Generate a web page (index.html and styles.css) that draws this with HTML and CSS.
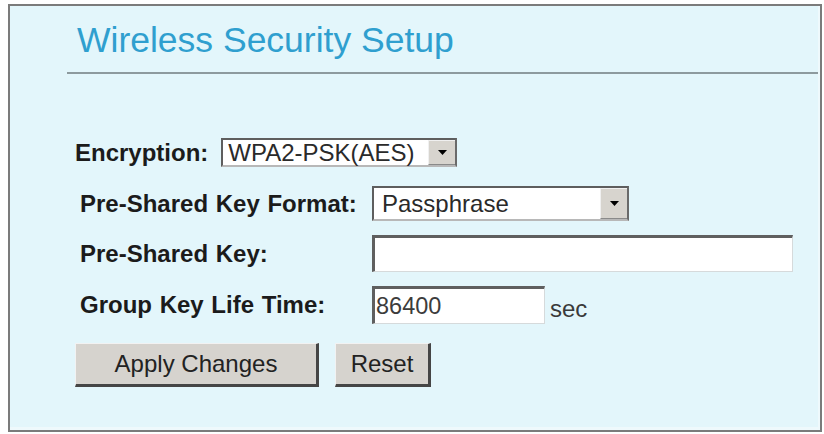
FILE: index.html
```html
<!DOCTYPE html>
<html>
<head>
<meta charset="utf-8">
<link rel="stylesheet" href="styles.css">
</head>
<body>
<div class="frame">
  <h1 class="title">Wireless Security Setup</h1>
  <div class="rule"></div>
  <div class="enc-row">
    <span class="label">Encryption:</span>
    <div class="select select-enc">
      <span class="select-text">WPA2-PSK(AES)</span>
      <span class="arrow"><svg width="9" height="5" viewBox="0 0 9 5"><path d="M0 0H9L4.5 5Z" fill="#000"/></svg></span>
    </div>
  </div>
  <div class="grid">
    <span class="label glabel">Pre-Shared Key Format:</span>
    <div class="select select-fmt">
      <span class="select-text">Passphrase</span>
      <span class="arrow"><svg width="9" height="5" viewBox="0 0 9 5"><path d="M0 0H9L4.5 5Z" fill="#000"/></svg></span>
    </div>
    <span class="label glabel">Pre-Shared Key:</span>
    <div class="input input-psk"></div>
    <span class="label glabel">Group Key Life Time:</span>
    <div class="life">
      <div class="input input-life"><span class="input-text">86400</span></div>
      <span class="unit">sec</span>
    </div>
  </div>
  <div class="buttons">
    <div class="btn btn-apply">Apply Changes</div>
    <div class="btn btn-reset">Reset</div>
  </div>
</div>
</body>
</html>
```
FILE: styles.css
```css
html, body {
  margin: 0;
  padding: 0;
  background: #ffffff;
}
body {
  font-family: "Liberation Sans", Arial, sans-serif;
}
.frame {
  margin: 4px 2px 0 8px;
  height: 428px;
  box-sizing: border-box;
  border: 2px solid #7b7b7b;
  background: #e3f6fb;
  box-shadow: inset -2px -3px 0 #eef9fc;
}
.title {
  margin: 0;
  padding: 14px 0 0 67px;
  font-size: 35.5px;
  line-height: 40px;
  font-weight: normal;
  color: #2f9fcf;
}
.rule {
  margin: 12px 2px 0 57px;
  height: 2px;
  background: #8d9a9e;
}
.label {
  font-size: 24px;
  font-weight: bold;
  color: #1b1b1b;
  white-space: nowrap;
}
.glabel {
  word-spacing: 1px;
}
.enc-row {
  display: flex;
  align-items: center;
  margin: 64px 0 0 65px;
  gap: 13px;
}
.select {
  display: flex;
  align-items: stretch;
  box-sizing: border-box;
  background: #ffffff;
  border-style: solid;
  border-width: 2px 2px 2px 2px;
  border-color: #5e5e5e #6a6a6a #b8b8b8 #5e5e5e;
}
.select-text {
  flex: 1;
  display: flex;
  align-items: center;
  padding-left: 6px;
  font-size: 24px;
  color: #2a2a2a;
  white-space: nowrap;
}
.arrow {
  width: 26px;
  display: flex;
  align-items: center;
  justify-content: center;
  background: #d7d4ce;
  border-left: 1px solid #f0f0f0;
  border-top: 1px solid #f0f0f0;
  border-bottom: 1px solid #8a8a8a;
}
.select-enc {
  width: 236px;
  height: 29px;
}
.select-enc .select-text {
  padding-left: 5px;
}
.grid {
  display: grid;
  grid-template-columns: 292px auto;
  row-gap: 14px;
  align-items: center;
  margin: 19px 0 0 70px;
}
.select-fmt {
  width: 257px;
  height: 35px;
}
.select-fmt .select-text {
  padding-left: 8px;
}
.input {
  box-sizing: border-box;
  background: #ffffff;
  border-style: solid;
  border-width: 3px 1px 1px 3px;
  border-color: #5f5f5f #d6dadb #d6dadb #5f5f5f;
  display: flex;
  align-items: center;
}
.input-psk {
  width: 421px;
  height: 37px;
}
.life {
  display: flex;
  align-items: center;
  gap: 5px;
}
.input-life {
  width: 173px;
  height: 38px;
}
.input-text {
  padding-left: 1px;
  font-size: 23.5px;
  color: #3c3c3c;
}
.unit {
  font-size: 24px;
  color: #3a3a3a;
  padding-top: 8px;
}
.buttons {
  display: flex;
  gap: 16px;
  margin: 19px 0 0 65px;
}
.btn {
  box-sizing: border-box;
  height: 44px;
  display: flex;
  align-items: center;
  justify-content: center;
  background: #d6d3ce;
  border-style: solid;
  border-width: 1px 3px 3px 1px;
  border-color: #f2f2f2 #454545 #454545 #f2f2f2;
  font-size: 24px;
  color: #222222;
}
.btn-apply {
  width: 244px;
}
.btn-reset {
  width: 96px;
}
```
